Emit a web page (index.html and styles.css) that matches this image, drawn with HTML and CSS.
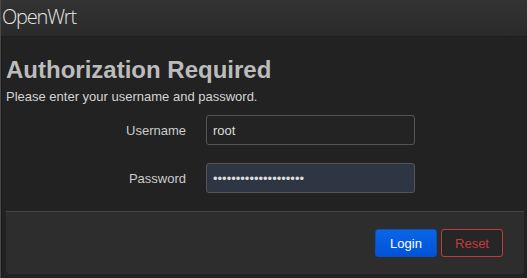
FILE: index.html
```html
<!doctype html>
<html lang="en">
<head>
  <meta charset="utf-8">
  <title>OpenWrt - Login</title>
  <link rel="stylesheet" href="styles.css">
</head>
<body>

<header class="topbar">
  <a class="brand" href="#">OpenWrt</a>
</header>

<div class="main">
  <form class="login" method="post">
    <h2>Authorization Required</h2>
    <p class="hint">Please enter your username and password.</p>

    <div class="field">
      <label for="luci_username">Username</label>
      <input type="text" id="luci_username" name="luci_username" value="root">
    </div>

    <div class="field">
      <label for="luci_password">Password</label>
      <input type="password" id="luci_password" name="luci_password" class="filled" value="xxxxxxxxxxxxxxxxxxxx">
    </div>

    <div class="actions">
      <button type="submit" class="btn btn-primary">Login</button>
      <button type="reset" class="btn btn-reset">Reset</button>
    </div>
  </form>
</div>

</body>
</html>
```

FILE: styles.css
```css
html, body {
  height: 100%;
}

body {
  margin: 0;
  background: #222222;
  color: #dddddd;
  font-family: "Liberation Sans", Arial, sans-serif;
  font-size: 13px;
  border-left: 1px solid #4a4a4a;
  box-shadow: inset 1px 0 0 #1a1a1a;
  box-sizing: border-box;
}

.topbar {
  height: 36px;
  background: linear-gradient(to bottom, #333333, #2a2a2a);
  border-bottom: 1px solid #1e1e1e;
}

.brand {
  display: inline-block;
  padding: 3px 0 0 1px;
  font-family: "Open Sans", sans-serif;
  font-weight: 300;
  font-size: 20px;
  letter-spacing: -1.2px;
  color: #e4e4e4;
  text-decoration: none;
}

.main {
  padding: 0 3px 0 5px;
}

.login h2 {
  margin: 19px 0 5px;
  font-size: 24px;
  font-weight: bold;
  color: #bcbcbc;
}

.hint {
  margin: 0 0 11px;
  color: #d4d4d4;
}

.field {
  display: flex;
  align-items: center;
  margin-bottom: 18px;
}

.field + .field {
  margin-bottom: 18px;
}

.field label {
  width: 180px;
  text-align: right;
  padding-right: 20px;
  color: #cccccc;
}

.field input {
  width: 209px;
  height: 30px;
  box-sizing: border-box;
  padding: 0 6px;
  font-family: inherit;
  font-size: 13px;
  color: #dddddd;
  background: #232323;
  border: 1px solid #555555;
  border-radius: 3px;
}

.field input.filled {
  background: #2e3644;
}

.field input:focus {
  outline: none;
}

.actions {
  display: flex;
  justify-content: flex-end;
  gap: 4px;
  height: 63px;
  box-sizing: border-box;
  padding: 17px 21px 0 0;
  background: #2d2d2d;
  border-top: 1px solid #444444;
  border-radius: 0 0 4px 4px;
}

.btn {
  width: 62px;
  height: 28px;
  font-family: inherit;
  font-size: 13px;
  border-radius: 3px;
  cursor: pointer;
}

.btn-primary {
  color: #ffffff;
  background: linear-gradient(to bottom, #0a66e6, #0052d6);
  border: 1px solid #0b4fb8;
}

.btn-reset {
  color: #c43a3a;
  background: #262626;
  border: 1px solid #c23b3b;
}
```
